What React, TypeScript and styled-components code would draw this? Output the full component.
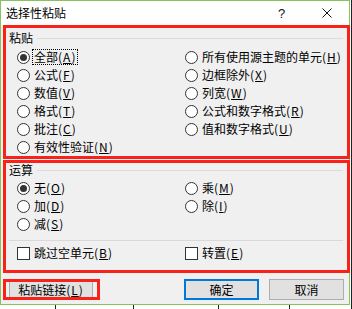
import React from 'react';
import styled, { createGlobalStyle } from 'styled-components';

type Opt = { text: string; key: string; checked?: boolean; focus?: boolean };

const pasteLeft: Opt[] = [
  { text: '全部', key: 'A', checked: true, focus: true },
  { text: '公式', key: 'F' },
  { text: '数值', key: 'V' },
  { text: '格式', key: 'T' },
  { text: '批注', key: 'C' },
  { text: '有效性验证', key: 'N' },
];

const pasteRight: Opt[] = [
  { text: '所有使用源主题的单元', key: 'H' },
  { text: '边框除外', key: 'X' },
  { text: '列宽', key: 'W' },
  { text: '公式和数字格式', key: 'R' },
  { text: '值和数字格式', key: 'U' },
];

const opLeft: Opt[] = [
  { text: '无', key: 'O', checked: true },
  { text: '加', key: 'D' },
  { text: '减', key: 'S' },
];

const opRight: Opt[] = [
  { text: '乘', key: 'M' },
  { text: '除', key: 'I' },
];

function Caption({ opt }: { opt: Opt }) {
  return (
    <Label $focus={opt.focus}>
      {opt.text}
      <Acc>
        (<u>{opt.key}</u>)
      </Acc>
    </Label>
  );
}

function RadioColumn({ items, width }: { items: Opt[]; width?: number }) {
  return (
    <Column $width={width}>
      {items.map(o => (
        <Row key={o.key}>
          <Radio $checked={o.checked} />
          <Caption opt={o} />
        </Row>
      ))}
    </Column>
  );
}

export default function App() {
  return (
    <>
      <GlobalStyle />
      <Window>
        <TitleBar>
          <Title>选择性粘贴</Title>
          <CaptionButton>?</CaptionButton>
          <CaptionButton>
            <svg width="10" height="10" viewBox="0 0 10 10">
              <path d="M0.5 0.5 L9.5 9.5 M9.5 0.5 L0.5 9.5" stroke="#111" strokeWidth="1" />
            </svg>
          </CaptionButton>
        </TitleBar>
        <Body>
          <Section $pt={3} $pb={0}>
            <Header>粘贴</Header>
            <Columns $mt={3}>
              <RadioColumn items={pasteLeft} width={168} />
              <RadioColumn items={pasteRight} />
            </Columns>
          </Section>
          <Section $pt={0} $pb={8} $mt={1}>
            <Header>运算</Header>
            <Columns $mt={2}>
              <RadioColumn items={opLeft} width={168} />
              <RadioColumn items={opRight} />
            </Columns>
            <Separator />
            <Columns $mt={3}>
              <Column $width={168}>
                <Row>
                  <Check />
                  <Caption opt={{ text: '跳过空单元', key: 'B' }} />
                </Row>
              </Column>
              <Column>
                <Row>
                  <Check />
                  <Caption opt={{ text: '转置', key: 'E' }} />
                </Row>
              </Column>
            </Columns>
          </Section>
          <Footer>
            <LinkWrap>
              <LinkButton>
                粘贴链接<Acc>(<u>L</u>)</Acc>
              </LinkButton>
            </LinkWrap>
            <Spacer />
            <DialogButton $primary>确定</DialogButton>
            <DialogButton>取消</DialogButton>
          </Footer>
        </Body>
      </Window>
    </>
  );
}

const GlobalStyle = createGlobalStyle`
  html, body {
    margin: 0;
    padding: 0;
  }
  body {
    width: 352px;
    height: 309px;
    overflow: hidden;
    font-family: "Noto Sans CJK SC", "Microsoft YaHei", sans-serif;
    font-size: 12px;
    color: #000;
    background:
      linear-gradient(#222, #222) 351px 0 / 1px 309px no-repeat,
      linear-gradient(#222, #222) 55px 305px / 1px 4px no-repeat,
      linear-gradient(#222, #222) 133px 305px / 1px 4px no-repeat,
      linear-gradient(#222, #222) 218px 305px / 1px 4px no-repeat,
      linear-gradient(#222, #222) 289px 305px / 1px 4px no-repeat,
      #fff;
  }
`;

const Window = styled.div`
  width: 350px;
  height: 305px;
  box-sizing: border-box;
  border: 1px solid #86c35a;
  background: #f0f0f0;
  display: flex;
  flex-direction: column;
`;

const TitleBar = styled.div`
  height: 24px;
  background: #fff;
  display: flex;
  align-items: center;
`;

const Title = styled.div`
  flex: 1;
  padding-left: 5px;
  font-size: 12px;
  line-height: 24px;
`;

const CaptionButton = styled.div`
  width: 45px;
  height: 24px;
  display: flex;
  align-items: center;
  justify-content: center;
  font-family: "Liberation Sans", sans-serif;
  font-size: 13px;
  color: #111;
`;

const Body = styled.div`
  flex: 1;
  padding-left: 2px;
  display: flex;
  flex-direction: column;
`;

const Section = styled.section<{ $pt: number; $pb: number; $mt?: number }>`
  width: 347px;
  box-sizing: border-box;
  border: 3px solid #f7231b;
  margin-top: ${p => p.$mt ?? 0}px;
  padding: ${p => p.$pt}px 0 ${p => p.$pb}px;
`;

const Header = styled.div`
  display: flex;
  align-items: center;
  gap: 4px;
  height: 14px;
  line-height: 14px;
  padding: 0 4px 0 3px;

  &::after {
    content: '';
    flex: 1;
    height: 1px;
    background: #dcdcdc;
  }
`;

const Columns = styled.div<{ $mt: number }>`
  display: flex;
  margin-top: ${p => p.$mt}px;
  padding-left: 11px;
`;

const Column = styled.div<{ $width?: number }>`
  display: flex;
  flex-direction: column;
  width: ${p => (p.$width ? `${p.$width}px` : 'auto')};
  flex: ${p => (p.$width ? 'none' : '1')};
`;

const Row = styled.div`
  display: flex;
  align-items: center;
  height: 18px;
`;

const Radio = styled.span<{ $checked?: boolean }>`
  width: 13px;
  height: 13px;
  box-sizing: border-box;
  border: 1px solid #333;
  border-radius: 50%;
  background: #fff;
  display: flex;
  align-items: center;
  justify-content: center;

  &::after {
    content: '';
    display: ${p => (p.$checked ? 'block' : 'none')};
    width: 7px;
    height: 7px;
    border-radius: 50%;
    background: #333;
  }
`;

const Check = styled.span`
  width: 13px;
  height: 13px;
  box-sizing: border-box;
  border: 1px solid #333;
  background: #fff;
`;

const Label = styled.span<{ $focus?: boolean }>`
  display: inline-block;
  margin-left: 3px;
  padding: 0 1px;
  height: 14px;
  line-height: 14px;
  white-space: nowrap;
  outline: ${p => (p.$focus ? '1px dotted #000' : 'none')};
`;

const Acc = styled.span`
  letter-spacing: 1px;
`;

const Separator = styled.div`
  height: 1px;
  margin: 7px 4px 0 3px;
  background: #d9d9d9;
`;

const Footer = styled.div`
  display: flex;
  align-items: center;
  margin-top: 6px;
  padding-right: 5px;
`;

const LinkWrap = styled.div`
  width: 97px;
  height: 21px;
  box-sizing: border-box;
  border: 3px solid #f7231b;
  padding-left: 3px;
  overflow: hidden;
  display: flex;
  align-items: center;
`;

const LinkButton = styled.div`
  width: 84px;
  height: 17px;
  flex: none;
  box-sizing: border-box;
  border: 1px solid #adadad;
  background: #e1e1e1;
  display: flex;
  align-items: center;
  justify-content: center;
  white-space: nowrap;
`;

const Spacer = styled.div`
  flex: 1;
`;

const DialogButton = styled.div<{ $primary?: boolean }>`
  width: 75px;
  height: 21px;
  box-sizing: border-box;
  border: ${p => (p.$primary ? '2px solid #0078d7' : '1px solid #adadad')};
  background: #e1e1e1;
  display: flex;
  align-items: center;
  justify-content: center;
  margin-left: 10px;
`;
